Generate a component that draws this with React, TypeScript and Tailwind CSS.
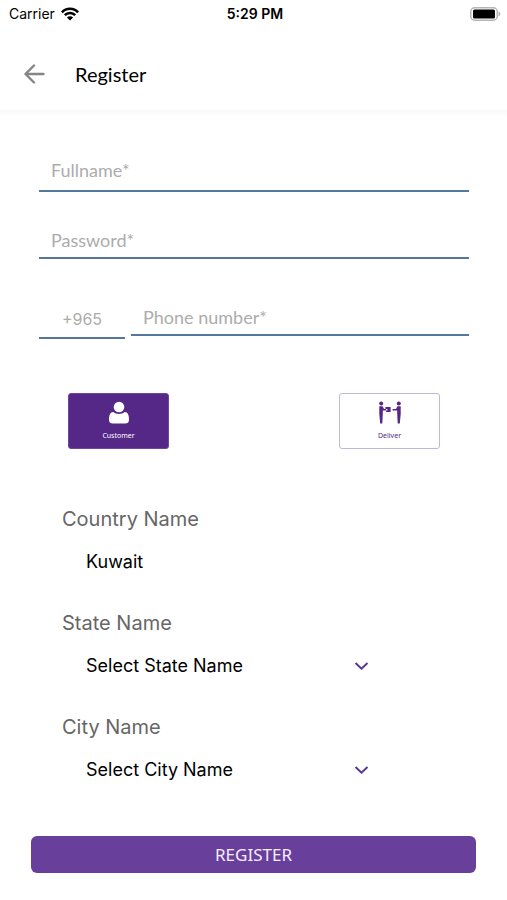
import { useState } from "react";
import type { ReactNode } from "react";

const humanist = "font-['Lato','Noto_Sans',sans-serif]";
const buttonFont = "font-['Noto_Sans','Open_Sans',sans-serif]";

function StatusBar() {
  return (
    <div className="grid h-7 grid-cols-3 items-center pr-1.5 pl-[9px] text-black">
      <div className="flex items-center gap-1.5 text-sm">
        <span>Carrier</span>
        <svg width="18" height="14" viewBox="0 0 18 14" aria-hidden="true">
          <g fill="none" stroke="currentColor" strokeWidth="2.5">
            <path d="M0.9 5.3 C5.2 0.5 12.8 0.5 17.1 5.3" />
            <path d="M3.8 8.2 C6.6 5.1 11.4 5.1 14.2 8.2" />
          </g>
          <path d="M9 13.6 L5.9 10.4 C7.6 8.8 10.4 8.8 12.1 10.4 Z" fill="currentColor" />
        </svg>
      </div>
      <span className="text-center text-sm font-semibold">5:29 PM</span>
      <svg className="justify-self-end" width="31" height="15" viewBox="0 0 31 15" aria-hidden="true">
        <rect x="0.75" y="0.75" width="26.5" height="12.5" rx="4" fill="#fff" stroke="#b5b5b5" strokeWidth="1.5" />
        <rect x="3" y="2.5" width="22" height="9" rx="1.5" fill="#000" />
        <path d="M28.5 4.5 C31 5.3 31 8.7 28.5 9.5 Z" fill="#b5b5b5" />
      </svg>
    </div>
  );
}

function Header() {
  return (
    <header className="flex h-[82px] items-center pt-2.5 pl-6">
      <button type="button" aria-label="Back" className="text-[#858585]">
        <svg width="21" height="20" viewBox="0 0 21 20" fill="none" stroke="currentColor" strokeWidth="2.4" strokeLinecap="round" strokeLinejoin="round">
          <path d="M19.5 10 H2 M10 1.5 L1.5 10 L10 18.5" />
        </svg>
      </button>
      <h1 className={`ml-[30px] text-xl text-black ${humanist}`}>Register</h1>
    </header>
  );
}

type TextFieldProps = {
  label: string;
  type: string;
  className: string;
};

function TextField({ label, type, className }: TextFieldProps) {
  return (
    <input
      type={type}
      aria-label={label}
      placeholder={label}
      className={`block min-w-0 border-b-2 border-[#54779c] bg-transparent text-black outline-none placeholder:text-[#acacac] ${className}`}
    />
  );
}

function PersonIcon() {
  return (
    <svg width="22" height="24" viewBox="0 0 22 24" fill="currentColor" aria-hidden="true">
      <circle cx="11" cy="6" r="5.3" />
      <path d="M5.2 11 C8.4 13.6 13.6 13.6 16.8 11 C19.8 11.2 21 14 21 18.6 C21 21.6 19.6 22.6 17 22.6 H5 C2.4 22.6 1 21.6 1 18.6 C1 14 2.2 11.2 5.2 11 Z" />
    </svg>
  );
}

function HandoverIcon() {
  return (
    <svg width="24" height="24" viewBox="0 0 24 24" fill="currentColor" aria-hidden="true">
      <circle cx="3.2" cy="2.6" r="2" />
      <circle cx="20.8" cy="2.6" r="2" />
      <path d="M1.3 5.2 H4.6 L6 8 H8 V9.6 H4.8 V13 L4.3 22.5 H2.2 L1.3 13 Z" />
      <path d="M22.7 5.2 H19.4 L18 8 H14.6 V9.6 H19.2 V13 L19.7 22.5 H21.8 L22.7 13 Z" />
      <path d="M7.4 6 H12.6 V11 H8 V9.6 H9.4 V8 H7.4 Z" />
    </svg>
  );
}

type RoleOptionProps = {
  value: string;
  checked: boolean;
  onSelect: (value: string) => void;
  children: ReactNode;
};

function RoleOption({ value, checked, onSelect, children }: RoleOptionProps) {
  return (
    <label
      className={`flex h-14 w-[101px] cursor-pointer flex-col items-center rounded-[3px] border pt-[7px] ${
        checked ? "border-[#6f45a0] bg-[#552787] text-white" : "border-[#c0b7da] bg-white text-[#552787]"
      }`}
    >
      <input
        type="radio"
        name="role"
        value={value}
        checked={checked}
        onChange={() => onSelect(value)}
        className="h-0 w-0 appearance-none"
      />
      {children}
      <span className={`mt-1.5 text-[7px] leading-[10px] ${buttonFont}`}>{value}</span>
    </label>
  );
}

function SelectField({ id, label, placeholder }: { id: string; label: string; placeholder: string }) {
  return (
    <div className="flex flex-col gap-[17px]">
      <label htmlFor={id} className="text-xl leading-7 text-[#666]">
        {label}
      </label>
      <div className="ml-6 grid max-w-[283px] items-center">
        <select
          id={id}
          className="col-start-1 row-start-1 h-6 w-full appearance-none bg-transparent text-lg leading-6 text-black outline-none"
        >
          <option>{placeholder}</option>
        </select>
        <svg
          className="pointer-events-none col-start-1 row-start-1 justify-self-end text-[#563692]"
          width="15"
          height="9"
          viewBox="0 0 15 9"
          fill="none"
          stroke="currentColor"
          strokeWidth="1.9"
          aria-hidden="true"
        >
          <path d="M1.5 1 L7.5 6.8 L13.5 1" />
        </svg>
      </div>
    </div>
  );
}

export default function App() {
  const [role, setRole] = useState("Customer");

  return (
    <div className="min-h-screen bg-white font-['Inter','Liberation_Sans',sans-serif]">
      <StatusBar />
      <Header />
      <div className="h-2 bg-linear-to-b from-[#f8f8f8] to-white" />
      <form onSubmit={(event) => event.preventDefault()}>
        <div className="pt-8 pr-[38px] pl-[39px]">
          <TextField label="Fullname*" type="text" className={`h-[42px] w-full px-3 text-lg ${humanist}`} />
          <div className="pt-[31px]">
            <TextField label="Password*" type="password" className={`h-9 w-full px-3 text-lg ${humanist}`} />
          </div>
          <div className="flex items-start gap-1.5 pt-[41px]">
            <TextField label="+965" type="tel" className="h-[39px] w-[86px] text-center text-base" />
            <TextField label="Phone number*" type="tel" className={`h-9 flex-1 px-3 text-lg ${humanist}`} />
          </div>
        </div>

        <div role="radiogroup" aria-label="Account type" className="flex justify-between pt-[54px] pr-[67px] pl-[68px]">
          <RoleOption value="Customer" checked={role === "Customer"} onSelect={setRole}>
            <PersonIcon />
          </RoleOption>
          <RoleOption value="Deliver" checked={role === "Deliver"} onSelect={setRole}>
            <HandoverIcon />
          </RoleOption>
        </div>

        <div className="flex flex-col gap-[35px] px-[62px] pt-14">
          <div className="flex flex-col gap-[17px]">
            <label htmlFor="country" className="text-xl leading-7 text-[#666]">
              Country Name
            </label>
            <input
              id="country"
              readOnly
              value="Kuwait"
              className="ml-6 h-6 max-w-[283px] bg-transparent text-lg leading-6 text-black outline-none"
            />
          </div>
          <SelectField id="state" label="State Name" placeholder="Select State Name" />
          <SelectField id="city" label="City Name" placeholder="Select City Name" />
        </div>

        <div className="px-[31px] pt-[54px] pb-7">
          <button
            type="submit"
            className={`h-[37px] w-full rounded-md bg-[#68409c] text-[17px] text-[#f5eeff] ${buttonFont}`}
          >
            REGISTER
          </button>
        </div>
      </form>
    </div>
  );
}
